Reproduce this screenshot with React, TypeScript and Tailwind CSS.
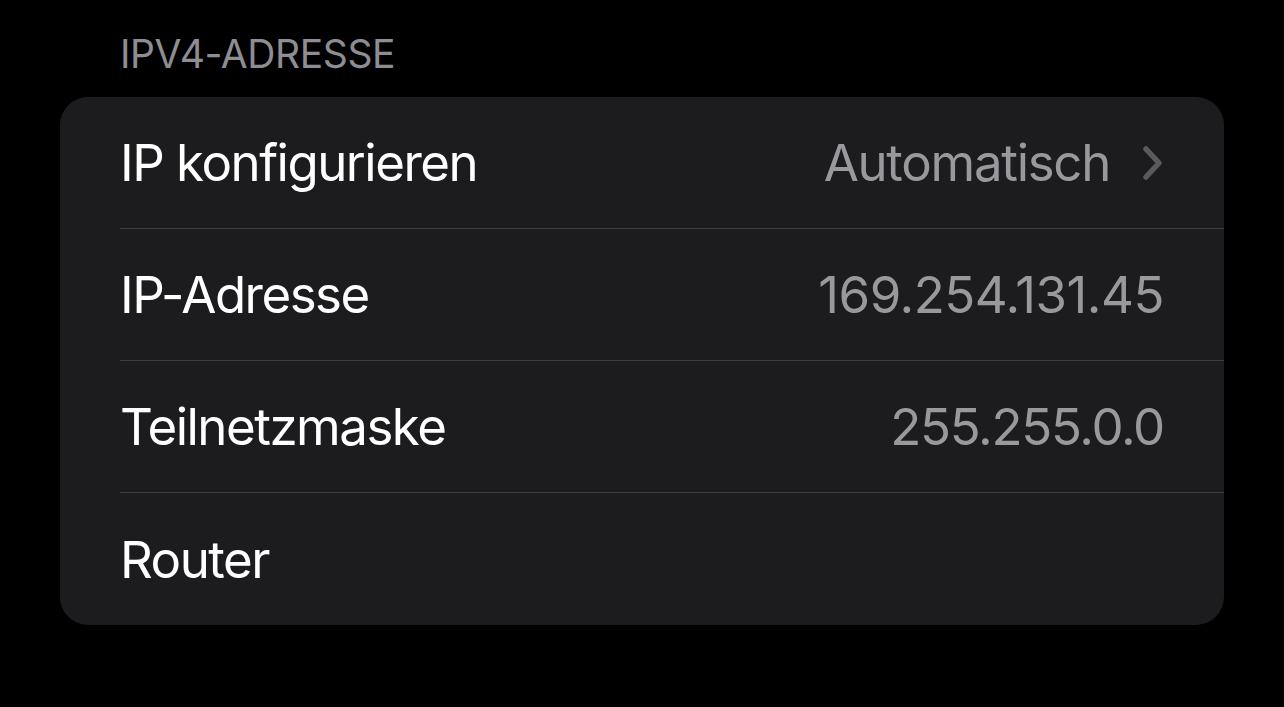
const rows = [
  { label: "IP konfigurieren", value: "Automatisch", chevron: true, track: "tracking-[-1.3px]" },
  { label: "IP-Adresse", value: "169.254.131.45", track: "tracking-[-0.5px]" },
  { label: "Teilnetzmaske", value: "255.255.0.0", track: "tracking-[-1.3px]" },
  { label: "Router", value: "", track: "" },
];

function Chevron() {
  return (
    <svg width="22" height="36" viewBox="0 0 22 36" className="ml-[32px]">
      <path
        d="M4 4 L17 18 L4 32"
        fill="none"
        stroke="#5a5a5e"
        strokeWidth="5.5"
        strokeLinecap="round"
        strokeLinejoin="round"
      />
    </svg>
  );
}

export default function App() {
  return (
    <div
      className="w-[1284px] h-[707px] bg-black overflow-hidden"
      style={{ fontFamily: "Inter, 'Noto Sans', sans-serif" }}
    >
      <div className="px-[60px]">
        <div className="h-[97px] flex items-end pb-[24px] pl-[60px] text-[39px] leading-none text-[#8d8d93] tracking-[-0.4px]">
          IPV4-ADRESSE
        </div>
        <div className="bg-[#1c1c1e] rounded-[28px] overflow-hidden">
          {rows.map((row, i) => (
            <div key={row.label} className="pl-[60px]">
              <div
                className={
                  "h-[132px] flex items-center justify-between pr-[60px] " +
                  (i < rows.length - 1 ? "border-b border-[#3d3d41]" : "")
                }
              >
                <span className="text-[51px] text-white tracking-[-1.5px] leading-none">
                  {row.label}
                </span>
                <div className="flex items-center">
                  <span className={"text-[51px] text-[#98989d] leading-none " + row.track}>
                    {row.value}
                  </span>
                  {row.chevron && <Chevron />}
                </div>
              </div>
            </div>
          ))}
        </div>
      </div>
    </div>
  );
}
